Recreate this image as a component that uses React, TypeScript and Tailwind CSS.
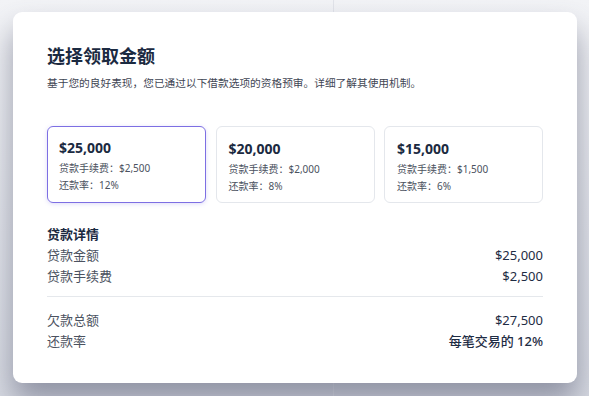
const options = [
  { amount: '$25,000', fee: '$2,500', rate: '12%' },
  { amount: '$20,000', fee: '$2,000', rate: '8%' },
  { amount: '$15,000', fee: '$1,500', rate: '6%' },
]

export default function App() {
  const selected = 0

  return (
    <div
      className="relative w-[589px] h-[396px] overflow-hidden bg-gradient-to-b from-[#f3f4f7] to-[#d8dbe3] pt-[12px] pl-[13px]"
      style={{ fontFamily: '"Noto Sans", "Noto Sans CJK SC", sans-serif' }}
    >
      <div className="absolute left-[333px] top-0 bottom-0 w-px bg-[#e2e4ea]" />
      <div className="relative w-[564px] h-[371px] rounded-[9px] bg-white shadow-[0_18px_30px_rgba(70,74,100,0.5)] px-[34px] pt-[31px]">
        <h1 className="text-[18px] leading-[26px] font-semibold text-[#1b2a41]">选择领取金额</h1>
        <p className="mt-[6px] text-[10.7px] leading-[16px] text-[#3f4654]">
          基于您的良好表现，您已通过以下借款选项的资格预审。详细了解其使用机制。
        </p>

        <div className="mt-[35px] grid grid-cols-3 gap-[9.5px]">
          {options.map((o, i) => (
            <div
              key={o.amount}
              className={
                i === selected
                  ? 'h-[77px] rounded-[6px] border-[1.5px] border-[#7d6fe3] shadow-[0_1px_4px_rgba(125,111,227,0.25)] px-[11px] pt-[11px]'
                  : 'h-[77px] rounded-[6px] border border-[#e4e7ec] px-[12px] pt-[12px]'
              }
            >
              <div className="text-[14px] leading-[20px] font-bold text-[#1b2a41]">{o.amount}</div>
              <div className="mt-[2px] text-[10px] leading-[17px] text-[#4b5260]">贷款手续费：{o.fee}</div>
              <div className="text-[10px] leading-[17px] text-[#4b5260]">还款率：{o.rate}</div>
            </div>
          ))}
        </div>

        <div className="mt-[21px] text-[13px] leading-[21px]">
          <div className="font-bold text-[#1b2a41]">贷款详情</div>
          <div className="flex justify-between">
            <span className="text-[#4b5260]">贷款金额</span>
            <span className="text-[#1e2c44]">$25,000</span>
          </div>
          <div className="flex justify-between">
            <span className="text-[#4b5260]">贷款手续费</span>
            <span className="text-[#1e2c44]">$2,500</span>
          </div>
          <div className="mt-[9px] mb-[13px] h-px bg-[#e5e8ec]" />
          <div className="flex justify-between">
            <span className="text-[#4b5260]">欠款总额</span>
            <span className="text-[#1e2c44]">$27,500</span>
          </div>
          <div className="flex justify-between">
            <span className="text-[#4b5260]">还款率</span>
            <span className="font-medium text-[#1e2c44]">每笔交易的 12%</span>
          </div>
        </div>
      </div>
    </div>
  )
}
